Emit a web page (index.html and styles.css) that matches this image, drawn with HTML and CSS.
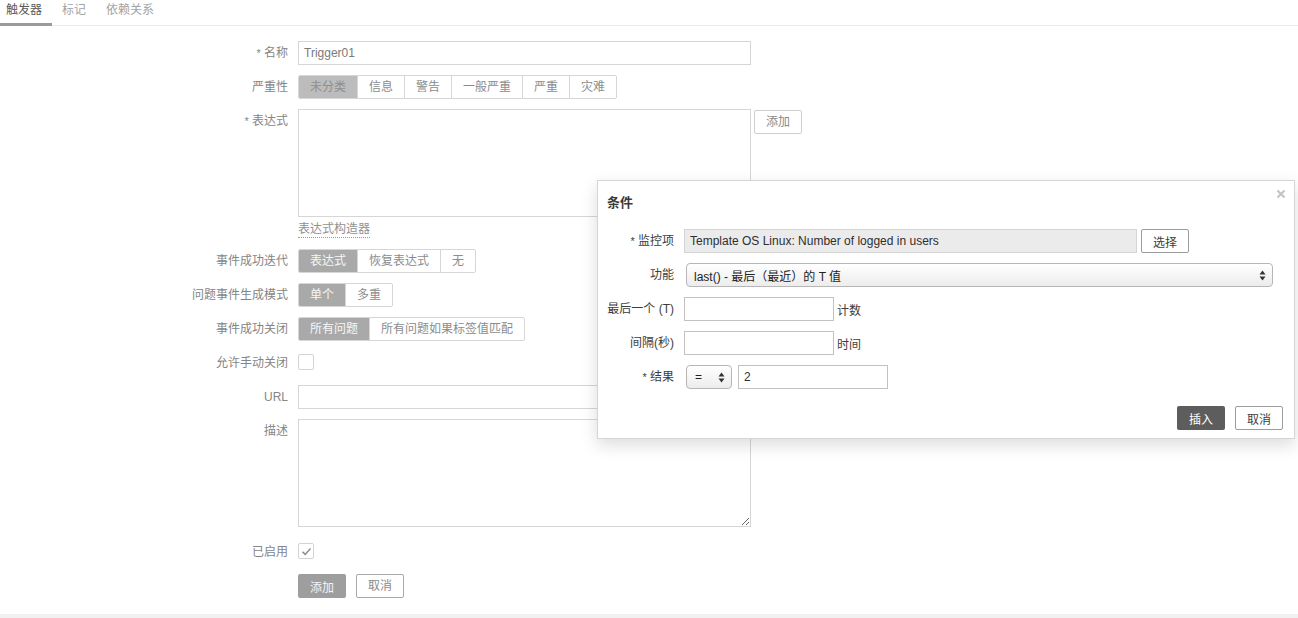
FILE: index.html
```html
<!DOCTYPE html>
<html lang="zh">
<head>
<meta charset="utf-8">
<title>触发器</title>
<link rel="stylesheet" href="styles.css">
</head>
<body>
<div class="tabs">
  <span class="tab active">触发器</span>
  <span class="tab">标记</span>
  <span class="tab">依赖关系</span>
</div>

<div class="form">
  <div class="row">
    <label class="lbl"><i>*</i> 名称</label>
    <div class="field"><input class="inp wide" type="text" value="Trigger01"></div>
  </div>
  <div class="row">
    <label class="lbl">严重性</label>
    <div class="field">
      <div class="seg sev">
        <span class="on">未分类</span><span>信息</span><span>警告</span><span>一般严重</span><span>严重</span><span>灾难</span>
      </div>
    </div>
  </div>
  <div class="row">
    <label class="lbl"><i>*</i> 表达式</label>
    <div class="field">
      <textarea class="area"></textarea>
      <button class="btn-alt add">添加</button>
    </div>
  </div>
  <div class="row link-row">
    <span class="lbl"></span>
    <div class="field"><span class="link">表达式构造器</span></div>
  </div>
  <div class="row">
    <label class="lbl">事件成功迭代</label>
    <div class="field">
      <div class="seg act"><span class="on">表达式</span><span>恢复表达式</span><span>无</span></div>
    </div>
  </div>
  <div class="row">
    <label class="lbl">问题事件生成模式</label>
    <div class="field">
      <div class="seg act"><span class="on">单个</span><span>多重</span></div>
    </div>
  </div>
  <div class="row">
    <label class="lbl">事件成功关闭</label>
    <div class="field">
      <div class="seg act"><span class="on">所有问题</span><span>所有问题如果标签值匹配</span></div>
    </div>
  </div>
  <div class="row">
    <label class="lbl">允许手动关闭</label>
    <div class="field"><span class="check"></span></div>
  </div>
  <div class="row">
    <label class="lbl">URL</label>
    <div class="field"><input class="inp wide" type="text"></div>
  </div>
  <div class="row">
    <label class="lbl">描述</label>
    <div class="field"><textarea class="area desc"></textarea></div>
  </div>
  <div class="row">
    <label class="lbl">已启用</label>
    <div class="field">
      <span class="check">
        <svg width="13" height="13" viewBox="0 0 13 13"><path d="M2.5 6.8 L5.2 9.4 L10.5 3.6" fill="none" stroke="#8c8c8c" stroke-width="1.5"/></svg>
      </span>
    </div>
  </div>
  <div class="row">
    <span class="lbl"></span>
    <div class="field buttons">
      <button class="btn-main">添加</button>
      <button class="btn-alt cancel">取消</button>
    </div>
  </div>
</div>
<div class="footer"></div>

<div class="modal">
  <div class="modal-head">
    <h4>条件</h4>
    <span class="close">
      <svg width="10" height="10" viewBox="0 0 10 10"><path d="M1.5 1.5 L8.5 8.5 M8.5 1.5 L1.5 8.5" stroke="#c4c4c4" stroke-width="2.2"/></svg>
    </span>
  </div>
  <div class="modal-body">
    <div class="mrow">
      <label class="mlbl"><i>*</i> 监控项</label>
      <div class="mfield">
        <input class="minp item" type="text" value="Template OS Linux: Number of logged in users" readonly>
        <button class="mbtn select-btn">选择</button>
      </div>
    </div>
    <div class="mrow">
      <label class="mlbl">功能</label>
      <div class="mfield">
        <div class="sel fn">
          <span>last() - 最后（最近）的 T 值</span>
          <svg class="arr" width="7" height="11" viewBox="0 0 7 11"><path d="M3.5 0.5 L6.5 4.5 L0.5 4.5 Z M3.5 10.5 L6.5 6.5 L0.5 6.5 Z" fill="#333"/></svg>
        </div>
      </div>
    </div>
    <div class="mrow">
      <label class="mlbl">最后一个 (T)</label>
      <div class="mfield"><input class="minp short" type="text"><span class="unit">计数</span></div>
    </div>
    <div class="mrow">
      <label class="mlbl">间隔(秒)</label>
      <div class="mfield"><input class="minp short" type="text"><span class="unit">时间</span></div>
    </div>
    <div class="mrow">
      <label class="mlbl"><i>*</i> 结果</label>
      <div class="mfield">
        <div class="sel op">
          <span>=</span>
          <svg class="arr" width="7" height="11" viewBox="0 0 7 11"><path d="M3.5 0.5 L6.5 4.5 L0.5 4.5 Z M3.5 10.5 L6.5 6.5 L0.5 6.5 Z" fill="#333"/></svg>
        </div>
        <input class="minp short val" type="text" value="2">
      </div>
    </div>
  </div>
  <div class="modal-foot">
    <button class="mbtn-main">插入</button>
    <button class="mbtn">取消</button>
  </div>
</div>
</body>
</html>
```

FILE: styles.css
```css
* { box-sizing: border-box; }

body {
  margin: 0;
  font-family: "Liberation Sans", Arial, "Noto Sans CJK SC", sans-serif;
  font-size: 12px;
  color: #8a8a8a;
  background: #fff;
  position: relative;
  min-height: 618px;
}

button, input, textarea {
  font-family: inherit;
  font-size: 12px;
}

/* Tabs */
.tabs {
  display: flex;
  height: 26px;
  border-bottom: 1px solid #ebebeb;
}
.tab {
  padding: 3px 10px 0;
  height: 26px;
  line-height: 14px;
  color: #a3a3a3;
}
.tab:first-child { margin-left: -4px; padding-left: 10px; }
.tab.active {
  color: #5a5a5a;
  border-bottom: 3px solid #9b9b9b;
}

/* Form */
.form {
  display: flex;
  flex-direction: column;
  gap: 10px;
  padding: 15px 0 16px;
}
.row {
  display: flex;
  align-items: flex-start;
}
.lbl {
  width: 288px;
  flex: none;
  text-align: right;
  line-height: 24px;
  color: #858585;
}
.lbl i { font-style: normal; font-size: 11px; }
.field {
  margin-left: 10px;
  display: flex;
  align-items: flex-start;
  gap: 3px;
  min-height: 24px;
}
.inp {
  height: 24px;
  border: 1px solid #d6d6d6;
  padding: 0 5px;
  color: #7a7a7a;
  background: #fff;
  outline: none;
}
.wide { width: 453px; }
.area {
  width: 453px;
  height: 108px;
  border: 1px solid #d6d6d6;
  resize: none;
  display: block;
  margin: 0 0 4px;
}
.area.desc { resize: vertical; margin-bottom: 3px; }

.link-row { margin-top: -10px; }
.link-row .field { min-height: 18px; }
.link {
  color: #909090;
  line-height: 16px;
  border-bottom: 1px dotted #9a9a9a;
}

/* Segmented */
.seg {
  display: inline-flex;
  height: 24px;
  border: 1px solid #d6d6d6;
  border-radius: 2px;
  overflow: hidden;
}
.seg span {
  padding: 0 11px;
  line-height: 22px;
  border-left: 1px solid #d6d6d6;
  color: #8c8c8c;
  white-space: nowrap;
}
.seg span:first-child { border-left: none; }
.sev span.on { background: #bcbcbc; color: #8e8e8e; }
.act span.on { background: #a9a9a9; color: #f7f7f7; }

.check {
  margin-top: 3px;
  width: 16px;
  height: 16px;
  border: 1px solid #d3d3d3;
  border-radius: 2px;
  display: flex;
  align-items: center;
  justify-content: center;
  background: #fff;
}

/* Buttons */
.btn-alt {
  height: 24px;
  padding: 0 10px;
  background: #fff;
  border: 1px solid #cfcfcf;
  border-radius: 2px;
  color: #8a8a8a;
  line-height: 22px;
}
.add { width: 48px; margin-top: 1px; }
.buttons { gap: 10px; }
.btn-main {
  height: 24px;
  width: 48px;
  border: none;
  border-radius: 2px;
  background: #9e9e9e;
  color: #f5f5f5;
  padding: 0;
}
.cancel { width: 48px; padding: 0; border-color: #a8a8a8; color: #8a8a8a; }

.footer {
  height: 10px;
  background: #f1f1f1;
}

/* Modal */
.modal {
  position: absolute;
  left: 597px;
  top: 180px;
  width: 698px;
  background: #fff;
  border: 1px solid #d5d5d5;
  box-shadow: 0 6px 16px rgba(0, 0, 0, 0.14);
  color: #3d3d3d;
  padding: 0 11px 8px 9px;
}
.modal-head {
  padding-top: 14px;
}
.modal-head h4 {
  margin: 0;
  font-size: 13px;
  line-height: 16px;
  font-weight: bold;
  color: #3a3a3a;
}
.close {
  position: absolute;
  top: 8px;
  right: 8px;
  width: 10px;
  height: 10px;
  display: block;
}
.close svg { display: block; }

.modal-body {
  display: flex;
  flex-direction: column;
  gap: 10px;
  padding-top: 18px;
}
.mrow { display: flex; align-items: center; }
.mlbl {
  width: 67px;
  flex: none;
  text-align: right;
  line-height: 24px;
  white-space: nowrap;
  color: #3d3d3d;
}
.mlbl i { font-style: normal; font-size: 11px; }
.mfield {
  margin-left: 10px;
  display: flex;
  align-items: center;
}
.minp {
  height: 24px;
  border: 1px solid #c2c2c2;
  padding: 0 5px;
  color: #333;
  background: #fff;
  outline: none;
}
.item {
  width: 453px;
  background: #ebebeb;
  border-color: #d4d4d4;
  color: #2e2e2e;
}
.short { width: 150px; }
.val { margin-left: 6px; width: 150px; }
.unit { margin-left: 3px; color: #3d3d3d; }

.mbtn {
  height: 24px;
  width: 48px;
  padding: 0;
  background: #fff;
  border: 1px solid #9c9c9c;
  border-radius: 2px;
  color: #3d3d3d;
}
.select-btn { margin-left: 4px; }

.sel {
  height: 24px;
  margin-left: 2px;
  border: 1px solid #b6b6b6;
  border-radius: 4px;
  background: linear-gradient(#ffffff, #ececec);
  display: flex;
  align-items: center;
  justify-content: space-between;
  padding: 0 6px 0 7px;
  color: #222;
}
.fn { width: 587px; }
.op { width: 46px; padding-left: 8px; }
.arr { display: block; }

.modal-foot {
  display: flex;
  justify-content: flex-end;
  gap: 10px;
  margin-top: 17px;
}
.mbtn-main {
  height: 24px;
  width: 48px;
  padding: 0;
  border: none;
  border-radius: 2px;
  background: #5d5d5d;
  color: #fff;
}
```
